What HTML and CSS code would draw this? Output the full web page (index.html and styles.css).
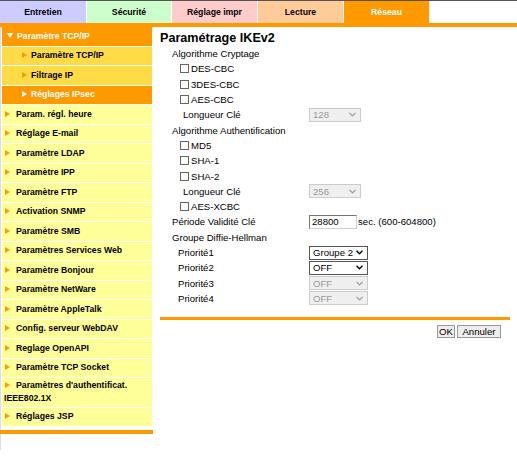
FILE: index.html
```html
<!DOCTYPE html>
<html>
<head>
  <meta charset="utf-8">
  <title>Réseau - Paramétrage IKEv2</title>
  <link rel="stylesheet" href="styles.css">
</head>
<body>
  <div class="tabs">
    <div class="tab tab-maint">Entretien</div>
    <div class="tab tab-security">Sécurité</div>
    <div class="tab tab-print">Réglage impr</div>
    <div class="tab tab-scan">Lecture</div>
    <div class="tab tab-network">Réseau</div>
  </div>
  <div class="tab-line"></div>

  <div class="main">
    <div class="menu-col">
      <ul class="menu">
        <li class="menu-head"><span class="arrow-down"></span>Paramètre TCP/IP</li>
        <li class="menu-sub"><span class="arrow"></span>Paramètre TCP/IP</li>
        <li class="menu-sub"><span class="arrow"></span>Filtrage IP</li>
        <li class="menu-sub active"><span class="arrow"></span>Réglages IPsec</li>
        <li><span class="arrow"></span>Param. régl. heure</li>
        <li><span class="arrow"></span>Réglage E-mail</li>
        <li><span class="arrow"></span>Paramètre LDAP</li>
        <li><span class="arrow"></span>Paramètre IPP</li>
        <li><span class="arrow"></span>Paramètre FTP</li>
        <li><span class="arrow"></span>Activation SNMP</li>
        <li><span class="arrow"></span>Paramètre SMB</li>
        <li><span class="arrow"></span>Paramètres Services Web</li>
        <li><span class="arrow"></span>Paramètre Bonjour</li>
        <li><span class="arrow"></span>Paramètre NetWare</li>
        <li><span class="arrow"></span>Paramètre AppleTalk</li>
        <li><span class="arrow"></span>Config. serveur WebDAV</li>
        <li><span class="arrow"></span>Reglage OpenAPI</li>
        <li><span class="arrow"></span>Paramètre TCP Socket</li>
        <li class="two-line"><span class="arrow"></span>Paramètres d'authentificat.<br>IEEE802.1X</li>
        <li><span class="arrow"></span>Réglages JSP</li>
      </ul>
      <div class="menu-foot"></div>
    </div>

    <div class="content">
      <h2>Paramétrage IKEv2</h2>

      <div class="row ind-1">Algorithme Cryptage</div>
      <label class="row ind-2"><input type="checkbox">DES-CBC</label>
      <label class="row ind-2"><input type="checkbox">3DES-CBC</label>
      <label class="row ind-2"><input type="checkbox">AES-CBC</label>
      <div class="row">
        <span class="label ind-3">Longueur Clé</span>
        <div class="select disabled w-short">128
          <svg width="7" height="5" viewBox="0 0 7 5"><polyline points="0.5,0.8 3.5,3.8 6.5,0.8" fill="none" stroke="currentColor" stroke-width="1.2"/></svg>
        </div>
      </div>

      <div class="row ind-1">Algorithme Authentification</div>
      <label class="row ind-2"><input type="checkbox">MD5</label>
      <label class="row ind-2"><input type="checkbox">SHA-1</label>
      <label class="row ind-2"><input type="checkbox">SHA-2</label>
      <div class="row">
        <span class="label ind-3">Longueur Clé</span>
        <div class="select disabled w-short">256
          <svg width="7" height="5" viewBox="0 0 7 5"><polyline points="0.5,0.8 3.5,3.8 6.5,0.8" fill="none" stroke="currentColor" stroke-width="1.2"/></svg>
        </div>
      </div>
      <label class="row ind-2"><input type="checkbox">AES-XCBC</label>

      <div class="row">
        <span class="label ind-1">Période Validité Clé</span>
        <input type="text" class="field" value="28800"><span class="unit">sec. (600-604800)</span>
      </div>

      <div class="row ind-1">Groupe Diffie-Hellman</div>
      <div class="row">
        <span class="label ind-4">Priorité1</span>
        <div class="select">Groupe 2
          <svg width="7" height="5" viewBox="0 0 7 5"><polyline points="0.5,0.8 3.5,3.8 6.5,0.8" fill="none" stroke="currentColor" stroke-width="1.4"/></svg>
        </div>
      </div>
      <div class="row">
        <span class="label ind-4">Priorité2</span>
        <div class="select">OFF
          <svg width="7" height="5" viewBox="0 0 7 5"><polyline points="0.5,0.8 3.5,3.8 6.5,0.8" fill="none" stroke="currentColor" stroke-width="1.4"/></svg>
        </div>
      </div>
      <div class="row">
        <span class="label ind-4">Priorité3</span>
        <div class="select disabled">OFF
          <svg width="7" height="5" viewBox="0 0 7 5"><polyline points="0.5,0.8 3.5,3.8 6.5,0.8" fill="none" stroke="currentColor" stroke-width="1.2"/></svg>
        </div>
      </div>
      <div class="row">
        <span class="label ind-4">Priorité4</span>
        <div class="select disabled">OFF
          <svg width="7" height="5" viewBox="0 0 7 5"><polyline points="0.5,0.8 3.5,3.8 6.5,0.8" fill="none" stroke="currentColor" stroke-width="1.2"/></svg>
        </div>
      </div>

      <div class="content-line"></div>
      <div class="actions">
        <button class="btn btn-ok">OK</button>
        <button class="btn btn-cancel">Annuler</button>
      </div>
    </div>
  </div>
</body>
</html>
```

FILE: styles.css
```css
body {
  margin: 0;
  border-top: 1px solid #555;
  font-family: "Liberation Sans", Arial, sans-serif;
  background-color: #ffffff;
  color: #000;
}

/* top tabs */
.tabs {
  display: flex;
  height: 22px;
}
.tab {
  width: 85px;
  margin-right: 1px;
  font-size: 8.7px;
  font-weight: bold;
  line-height: 22px;
  text-align: center;
}
.tab-maint { background-color: #ccccff; width: 86px; }
.tab-security { background-color: #ccffcc; width: 84px; }
.tab-print { background-color: #ffcccc; }
.tab-scan { background-color: #ffcc99; }
.tab-network { background-color: #ff9900; color: #fff; }
.tab-line {
  height: 4px;
  background-color: #ff9900;
}

.main {
  display: flex;
}

/* left menu */
.menu-col {
  width: 150px;
  border-left: 1px solid #ddd;
  padding-left: 1px;
  padding-bottom: 16px;
}
.menu {
  list-style: none;
  margin: 0;
  padding: 0;
  width: 150px;
}
.menu li {
  background-color: #ffff99;
  border-bottom: 1px solid #fff;
  padding: 2.75px 0 2.75px 2px;
  font-size: 8.7px;
  font-weight: bold;
  line-height: 13px;
  white-space: nowrap;
}
.menu li.two-line {
  padding-top: 1.25px;
  padding-bottom: 1.25px;
}
.menu .menu-head {
  background-color: #ff9900;
  color: #fff;
  padding-left: 5px;
}
.menu .menu-sub {
  background-color: #ffdc46;
  padding-left: 20px;
}
.menu .menu-sub.active {
  background-color: #ff9900;
  color: #fff;
}
.arrow {
  display: inline-block;
  width: 0;
  height: 0;
  margin: 0 6px 0 1px;
  border-left: 5px solid #ff9900;
  border-top: 3px solid transparent;
  border-bottom: 3px solid transparent;
}
.menu-sub .arrow {
  margin: 0 4px 0 0;
}
.menu-sub.active .arrow {
  border-left-color: #fff;
}
.arrow-down {
  display: inline-block;
  width: 0;
  height: 0;
  margin: 0 4px 1px 0;
  border-top: 5px solid #fff;
  border-left: 3px solid transparent;
  border-right: 3px solid transparent;
}
.menu-foot {
  width: 153px;
  height: 4px;
  margin-top: 3px;
  margin-left: -2px;
  background-color: #ff9900;
}

/* content */
.content {
  width: 350px;
  margin-left: 8px;
  font-size: 9.6px;
}
.content h2 {
  margin: 0;
  padding-top: 3px;
  font-size: 12.6px;
  line-height: 16px;
}
.row {
  display: flex;
  align-items: center;
  height: 15.3px;
}
.label {
  width: 149px;
  box-sizing: border-box;
  flex-shrink: 0;
}
.ind-1 { padding-left: 12px; }
.ind-2 { padding-left: 20px; }
.ind-3 { padding-left: 23px; }
.ind-4 { padding-left: 18px; }

.row input[type="checkbox"] {
  appearance: none;
  -webkit-appearance: none;
  width: 9px;
  height: 9px;
  margin: 0 2px 0 0;
  border: 1px solid #666;
  background-color: #fff;
  box-sizing: border-box;
}

.field {
  width: 48px;
  height: 14px;
  box-sizing: border-box;
  margin: 0;
  padding: 0 2px;
  border: 1px solid;
  border-color: #767676 #d0d0d0 #d0d0d0 #767676;
  font-family: inherit;
  font-size: 9.6px;
}
.unit {
  margin-left: 1px;
}

.select {
  display: flex;
  align-items: center;
  justify-content: space-between;
  width: 59px;
  height: 14px;
  box-sizing: border-box;
  padding: 0 4px 0 3px;
  border: 1px solid #555;
  background-color: #fff;
  color: #000;
}
.select.disabled {
  border-color: #ccc;
  background-color: #efefef;
  color: #999;
}
.select.w-short {
  width: 52px;
}

.content-line {
  height: 3px;
  margin-top: 11px;
  background-color: #ff9900;
}
.actions {
  display: flex;
  justify-content: flex-end;
  gap: 2px;
  margin-top: 5px;
  padding-right: 9px;
}
.btn {
  height: 13px;
  padding: 0;
  border: 1px solid #999;
  background-color: #eeeeee;
  font-family: inherit;
  font-size: 9.6px;
  line-height: 11px;
}
.btn-ok { width: 18px; }
.btn-cancel { width: 44px; }
```
